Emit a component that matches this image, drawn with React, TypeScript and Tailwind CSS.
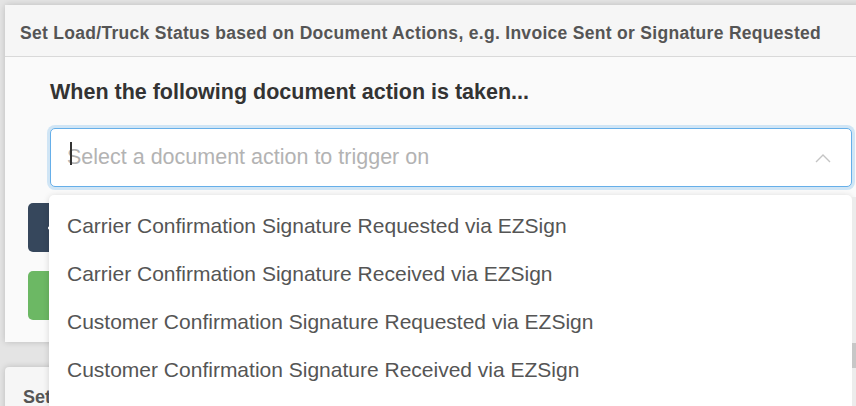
import React from 'react';

const actions = [
  'Carrier Confirmation Signature Requested via EZSign',
  'Carrier Confirmation Signature Received via EZSign',
  'Customer Confirmation Signature Requested via EZSign',
  'Customer Confirmation Signature Received via EZSign',
];

const App: React.FC = () => {
  return (
    <div
      className="relative h-[406px] w-[856px] overflow-hidden bg-[#e4e4e4]"
      style={{ fontFamily: '"Liberation Sans", Arial, sans-serif' }}
    >
      <div className="flex flex-col gap-[25px] pl-[5px] pt-[5px]">
        {/* rule card */}
        <div className="w-[860px] rounded-tl-[4px] bg-[#fafafa] shadow-[0_0_6px_rgba(0,0,0,0.18)]">
          <div className="flex h-[52px] items-center border-b border-[#d9d9d9] bg-[#f6f6f6] px-[15px] pt-[5px]">
            <h3 className="whitespace-nowrap text-[17.5px] font-bold tracking-[0.3px] text-[#555]">
              Set Load/Truck Status based on Document Actions, e.g. Invoice Sent or Signature Requested
            </h3>
          </div>
          <div className="pb-[22px] pl-[23px] pr-[13px] pt-[22px]">
            <div className="pl-[22px]">
              <label className="block text-[21.5px] font-bold leading-[26px] text-[#333]">
                When the following document action is taken...
              </label>
              <div className="mt-[23px] flex h-[59px] items-center rounded-[5px] border border-[#66afe9] bg-white pl-[16px] pr-[18px] shadow-[0_0_0_3px_rgba(102,175,233,0.28)]">
                <span className="relative flex-1 text-[21.5px] text-[#b3b3b3]">
                  Select a document action to trigger on
                  <span className="absolute left-[3px] top-[1px] h-[23px] w-[2px] bg-[#333]" />
                </span>
                <svg width="16" height="10" viewBox="0 0 16 10" fill="none" className="mr-[2px]">
                  <polyline points="1,9 8,2 15,9" stroke="#c4c4c4" strokeWidth="1.4" />
                </svg>
              </div>
            </div>
            <div className="mt-[16px] flex flex-col gap-[19px]">
              <button className="flex h-[49px] w-[160px] items-center rounded-[5px] bg-[#36475c] pl-[19px]">
                <svg width="14" height="14" viewBox="0 0 14 14">
                  <path d="M7 1v12M1 7h12" stroke="#fff" strokeWidth="2.5" />
                </svg>
              </button>
              <button className="h-[49px] w-[120px] rounded-[5px] bg-[#6cb864]" />
            </div>
          </div>
        </div>

        {/* next card */}
        <div className="h-[80px] w-[860px] rounded-tl-[4px] bg-[#f6f6f6] px-[18px] pt-[17px] shadow-[0_0_6px_rgba(0,0,0,0.18)]">
          <h3 className="text-[18px] font-bold text-[#555]">Set</h3>
        </div>
      </div>

      {/* open dropdown menu */}
      <div className="absolute left-[49px] top-[195px] h-[230px] w-[803px] rounded-t-[5px] bg-white py-[7px] shadow-[0_1px_6px_rgba(0,0,0,0.15)]">
        {actions.map((a) => (
          <div key={a} className="flex h-[48px] items-center px-[18px] text-[21px] text-[#555]">
            {a}
          </div>
        ))}
      </div>

      {/* scrollbar */}
      <div className="absolute right-0 top-[197px] h-[209px] w-[4px] bg-[#ececec]">
        <div className="mt-[146px] h-[25px] w-full bg-[#c7c7c7]" />
      </div>
    </div>
  );
};

export default App;
